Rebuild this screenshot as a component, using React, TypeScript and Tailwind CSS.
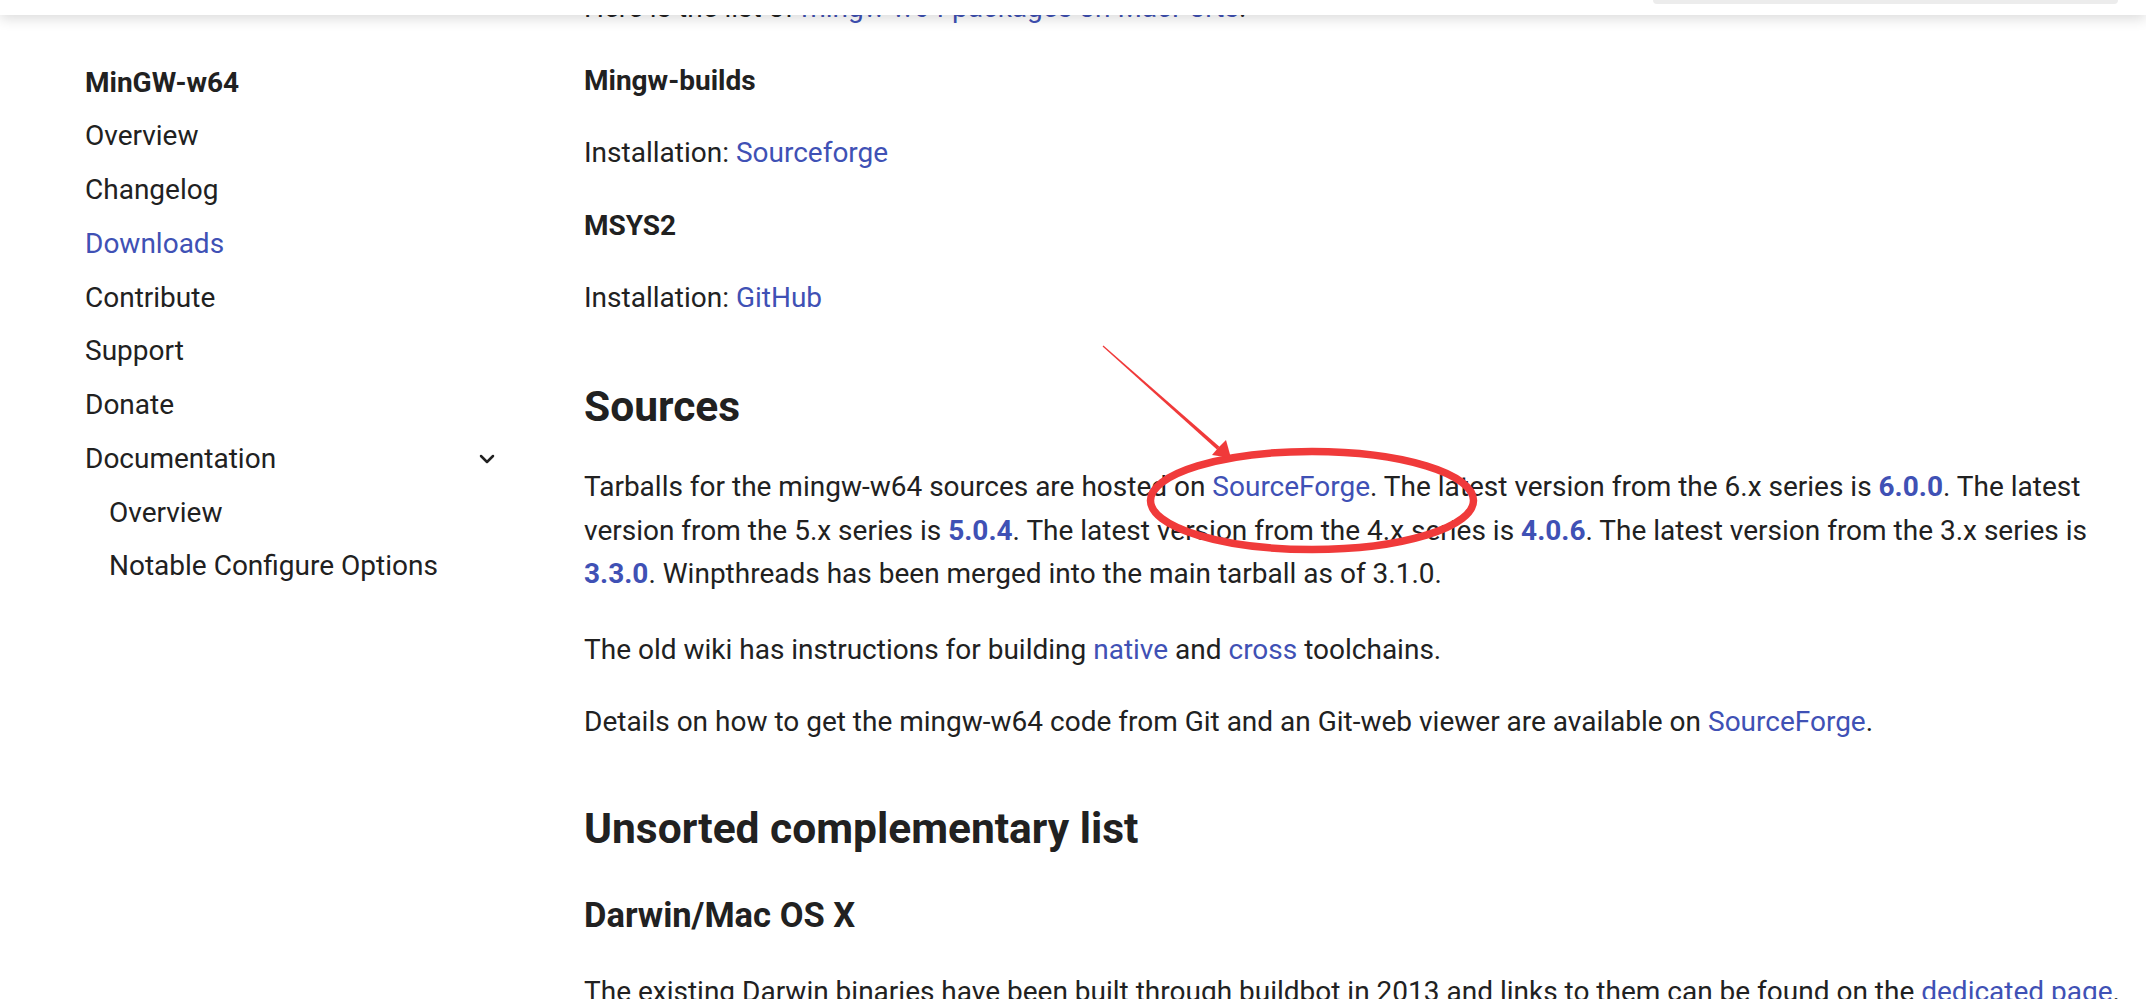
import { ChevronDown } from "lucide-react";

const link = "text-[#3f51b5]";
const strongLink = "font-bold text-[#3f51b5]";

const navItems = ["Overview", "Changelog", "Downloads", "Contribute", "Support", "Donate"];

function Sidebar() {
  return (
    <aside className="w-[584px] shrink-0 pl-[85px] pt-[55.5px] text-[28px] leading-[53.75px]">
      <nav className="w-[414px]">
        <div className="font-bold">MinGW-w64</div>
        {navItems.map((item) => (
          <div key={item} className={item === "Downloads" ? link : ""}>
            {item}
          </div>
        ))}
        <div className="flex items-center justify-between">
          <span>Documentation</span>
          <ChevronDown size={24} strokeWidth={2.5} color="#212121" />
        </div>
        <div className="pl-[24px]">
          <div>Overview</div>
          <div>Notable Configure Options</div>
        </div>
      </nav>
    </aside>
  );
}

// red markup drawn on top of the screenshot
function Annotation() {
  return (
    <svg
      className="pointer-events-none absolute left-0 top-0 z-20"
      width={2146}
      height={999}
      viewBox="0 0 2146 999"
    >
      <ellipse cx={1312} cy={500.5} rx={161.5} ry={49} fill="none" stroke="#f03a3a" strokeWidth={7.5} />
      <polygon points="1102.6,346.5 1103.4,345.5 1219.5,446.8 1216.9,449.6" fill="#f03a3a" />
      <polygon points="1231,458 1212,455 1218,448 1226,440" fill="#f03a3a" />
    </svg>
  );
}

export default function App() {
  return (
    <div className="relative h-[999px] overflow-hidden bg-white font-['Roboto',sans-serif] text-[#212121]">
      <header className="absolute inset-x-0 top-0 z-10 h-[15px] bg-white shadow-[0_3px_14px_rgba(0,0,0,0.16)]">
        <div className="absolute right-[28px] top-0 h-[4px] w-[465px] rounded-b-[4px] bg-[#ececec]" />
      </header>

      <div className="flex">
        <Sidebar />
        <main className="-mt-[14.3px] w-[1546px] text-[28px] leading-[43.5px]">
          <p>
            Here is the list of <a className={link}>mingw-w64 packages on MacPorts</a>.
          </p>
          <h4 className="mt-[29.5px] font-bold">Mingw-builds</h4>
          <p className="mt-[28.5px]">
            Installation: <a className={link}>Sourceforge</a>
          </p>
          <h4 className="mt-[29.5px] font-bold">MSYS2</h4>
          <p className="mt-[28.5px]">
            Installation: <a className={link}>GitHub</a>
          </p>

          <h2 className="mt-[62.9px] text-[42.5px] font-bold leading-[50.4px]">Sources</h2>
          <p className="mt-[32.9px]">
            Tarballs for the mingw-w64 sources are hosted on <a className={link}>SourceForge</a>. The
            latest version from the 6.x series is <a className={strongLink}>6.0.0</a>. The latest
            version from the 5.x series is <a className={strongLink}>5.0.4</a>. The latest version
            from the 4.x series is <a className={strongLink}>4.0.6</a>. The latest version from the
            3.x series is <a className={strongLink}>3.3.0</a>. Winpthreads has been merged into the
            main tarball as of 3.1.0.
          </p>
          <p className="mt-[32.1px]">
            The old wiki has instructions for building <a className={link}>native</a> and{" "}
            <a className={link}>cross</a> toolchains.
          </p>
          <p className="mt-[28.9px]">
            Details on how to get the mingw-w64 code from Git and an Git-web viewer are available on{" "}
            <a className={link}>SourceForge</a>.
          </p>

          <h2 className="mt-[59.8px] text-[42.5px] font-bold leading-[50.4px]">
            Unsorted complementary list
          </h2>
          <h3 className="mt-[39.6px] text-[34.5px] font-bold leading-[42px]">Darwin/Mac OS X</h3>
          <p className="mt-[34.7px]">
            The existing Darwin binaries have been built through buildbot in 2013 and links to them
            can be found on the <a className={link}>dedicated page</a>.
          </p>
        </main>
      </div>

      <Annotation />
    </div>
  );
}
